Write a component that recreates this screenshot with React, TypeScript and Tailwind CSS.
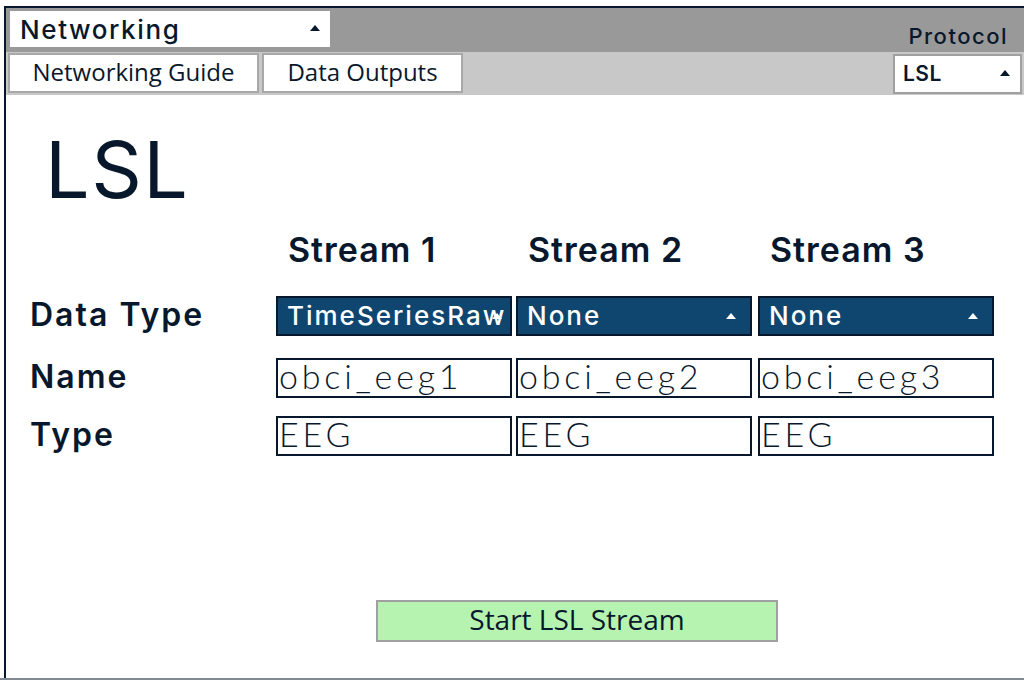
import React from "react";

const M = { fontFamily: "Inter, 'Noto Sans', sans-serif" };
const OS = { fontFamily: "'Open Sans', sans-serif" };
const RL = { fontFamily: "Lato, 'Noto Sans', sans-serif" };

function Up({ color }: { color: string }) {
  return (
    <svg width="10" height="6" viewBox="0 0 10 6">
      <polygon points="5,0 10,6 0,6" fill={color} />
    </svg>
  );
}

function BlueSelect({ label, clip }: { label: string; clip?: boolean }) {
  return (
    <div className="relative h-[40px] w-[236px] border-2 border-[#08182c] bg-[#0e4670] flex items-center pl-[9px] pr-[14px] overflow-hidden">
      <span className="text-[26px] font-medium tracking-[2px] text-white whitespace-nowrap leading-none" style={M}>{label}</span>
      {!clip && <span className="ml-auto"><Up color="#ffffff" /></span>}
      {clip && <span className="absolute right-[8px] top-[15px]"><Up color="#ffffff" /></span>}
    </div>
  );
}

function Field({ value }: { value: string }) {
  return (
    <div className="h-[40px] w-[236px] border-2 border-[#08182c] bg-white flex items-center pl-[1px] pb-[4px]">
      <span className="text-[34px] font-light tracking-[3.8px] text-[#08182c] whitespace-nowrap leading-[36px]" style={RL}>{value}</span>
    </div>
  );
}

function Label({ text }: { text: string }) {
  return (
    <div className="w-[246px] text-[32px] font-semibold tracking-[2px] leading-none pb-[2px]" style={M}>{text}</div>
  );
}

export default function App() {
  return (
    <div className="w-[1024px] h-[680px] bg-white flex flex-col text-[#08182c]">
      <div className="flex-1 flex flex-col pt-[6px] pl-[4px] border-b-2 border-[#808a90]">
        <div className="flex-1 flex flex-col border-l-2 border-t-2 border-[#08182c]">
          {/* top band */}
          <div className="h-[44px] bg-[#999999] flex items-start pl-[4px] pr-[16px]">
            <div className="mt-[3px] w-[320px] h-[36px] bg-white flex items-center pl-[10px] pr-[10px]">
              <span className="text-[26px] font-medium tracking-[1.6px]" style={M}>Networking</span>
              <span className="ml-auto mb-[2px]"><Up color="#08182c" /></span>
            </div>
            <div className="ml-auto mt-[17px] text-[22px] font-medium tracking-[1.5px] leading-none" style={M}>Protocol</div>
          </div>
          {/* second band */}
          <div className="h-[43px] bg-[#c8c8c8] flex items-start pl-[2px] pr-[2px] pt-[1px]">
            <div className="h-[40px] w-[251px] bg-white border-2 border-[#a8a8a8] flex items-center justify-center pb-[3px]">
              <span className="text-[24px] text-[#08182c]" style={OS}>Networking Guide</span>
            </div>
            <div className="ml-[3px] h-[40px] w-[201px] bg-white border-2 border-[#a8a8a8] flex items-center justify-center pb-[3px]">
              <span className="text-[24px] text-[#08182c]" style={OS}>Data Outputs</span>
            </div>
            <div className="ml-auto mt-[1px] h-[40px] w-[129px] bg-white border-2 border-[#a0a0a0] flex items-center pl-[8px] pr-[10px]">
              <span className="text-[21px] font-semibold tracking-[0.5px]" style={M}>LSL</span>
              <span className="ml-auto mb-[2px]"><Up color="#08182c" /></span>
            </div>
          </div>
          {/* content */}
          <div className="flex-1 flex flex-col">
            <div className="mt-[26px] ml-[39px] text-[79px] font-normal tracking-[1.5px] leading-[96px]" style={M}>LSL</div>
            <div className="mt-[13px] ml-[24px] flex h-[40px] items-center">
              <div className="w-[246px]" />
              <div className="w-[236px] pl-[12px] text-[34px] font-semibold tracking-[1px] leading-[40px]" style={M}>Stream 1</div>
              <div className="ml-[4px] w-[236px] pl-[12px] text-[34px] font-semibold tracking-[1px] leading-[40px]" style={M}>Stream 2</div>
              <div className="ml-[6px] w-[236px] pl-[12px] text-[34px] font-semibold tracking-[1px] leading-[40px]" style={M}>Stream 3</div>
            </div>
            <div className="mt-[26px] ml-[24px] flex flex-col">
              <div className="flex items-center h-[40px]">
                <Label text="Data Type" />
                <BlueSelect label="TimeSeriesRaw" clip />
                <div className="ml-[4px]"><BlueSelect label="None" /></div>
                <div className="ml-[6px]"><BlueSelect label="None" /></div>
              </div>
              <div className="flex items-center h-[40px] mt-[22px]">
                <Label text="Name" />
                <Field value="obci_eeg1" />
                <div className="ml-[4px]"><Field value="obci_eeg2" /></div>
                <div className="ml-[6px]"><Field value="obci_eeg3" /></div>
              </div>
              <div className="flex items-center h-[40px] mt-[18px]">
                <Label text="Type" />
                <Field value="EEG" />
                <div className="ml-[4px]"><Field value="EEG" /></div>
                <div className="ml-[6px]"><Field value="EEG" /></div>
              </div>
            </div>
            <div className="mt-[144px] ml-[370px] w-[402px] h-[42px] bg-[#b6f3b0] border-2 border-[#a0a0a0] flex items-center justify-center pb-[4px]">
              <span className="text-[28px] leading-none text-[#08182c]" style={OS}>Start LSL Stream</span>
            </div>
          </div>
        </div>
      </div>
    </div>
  );
}
